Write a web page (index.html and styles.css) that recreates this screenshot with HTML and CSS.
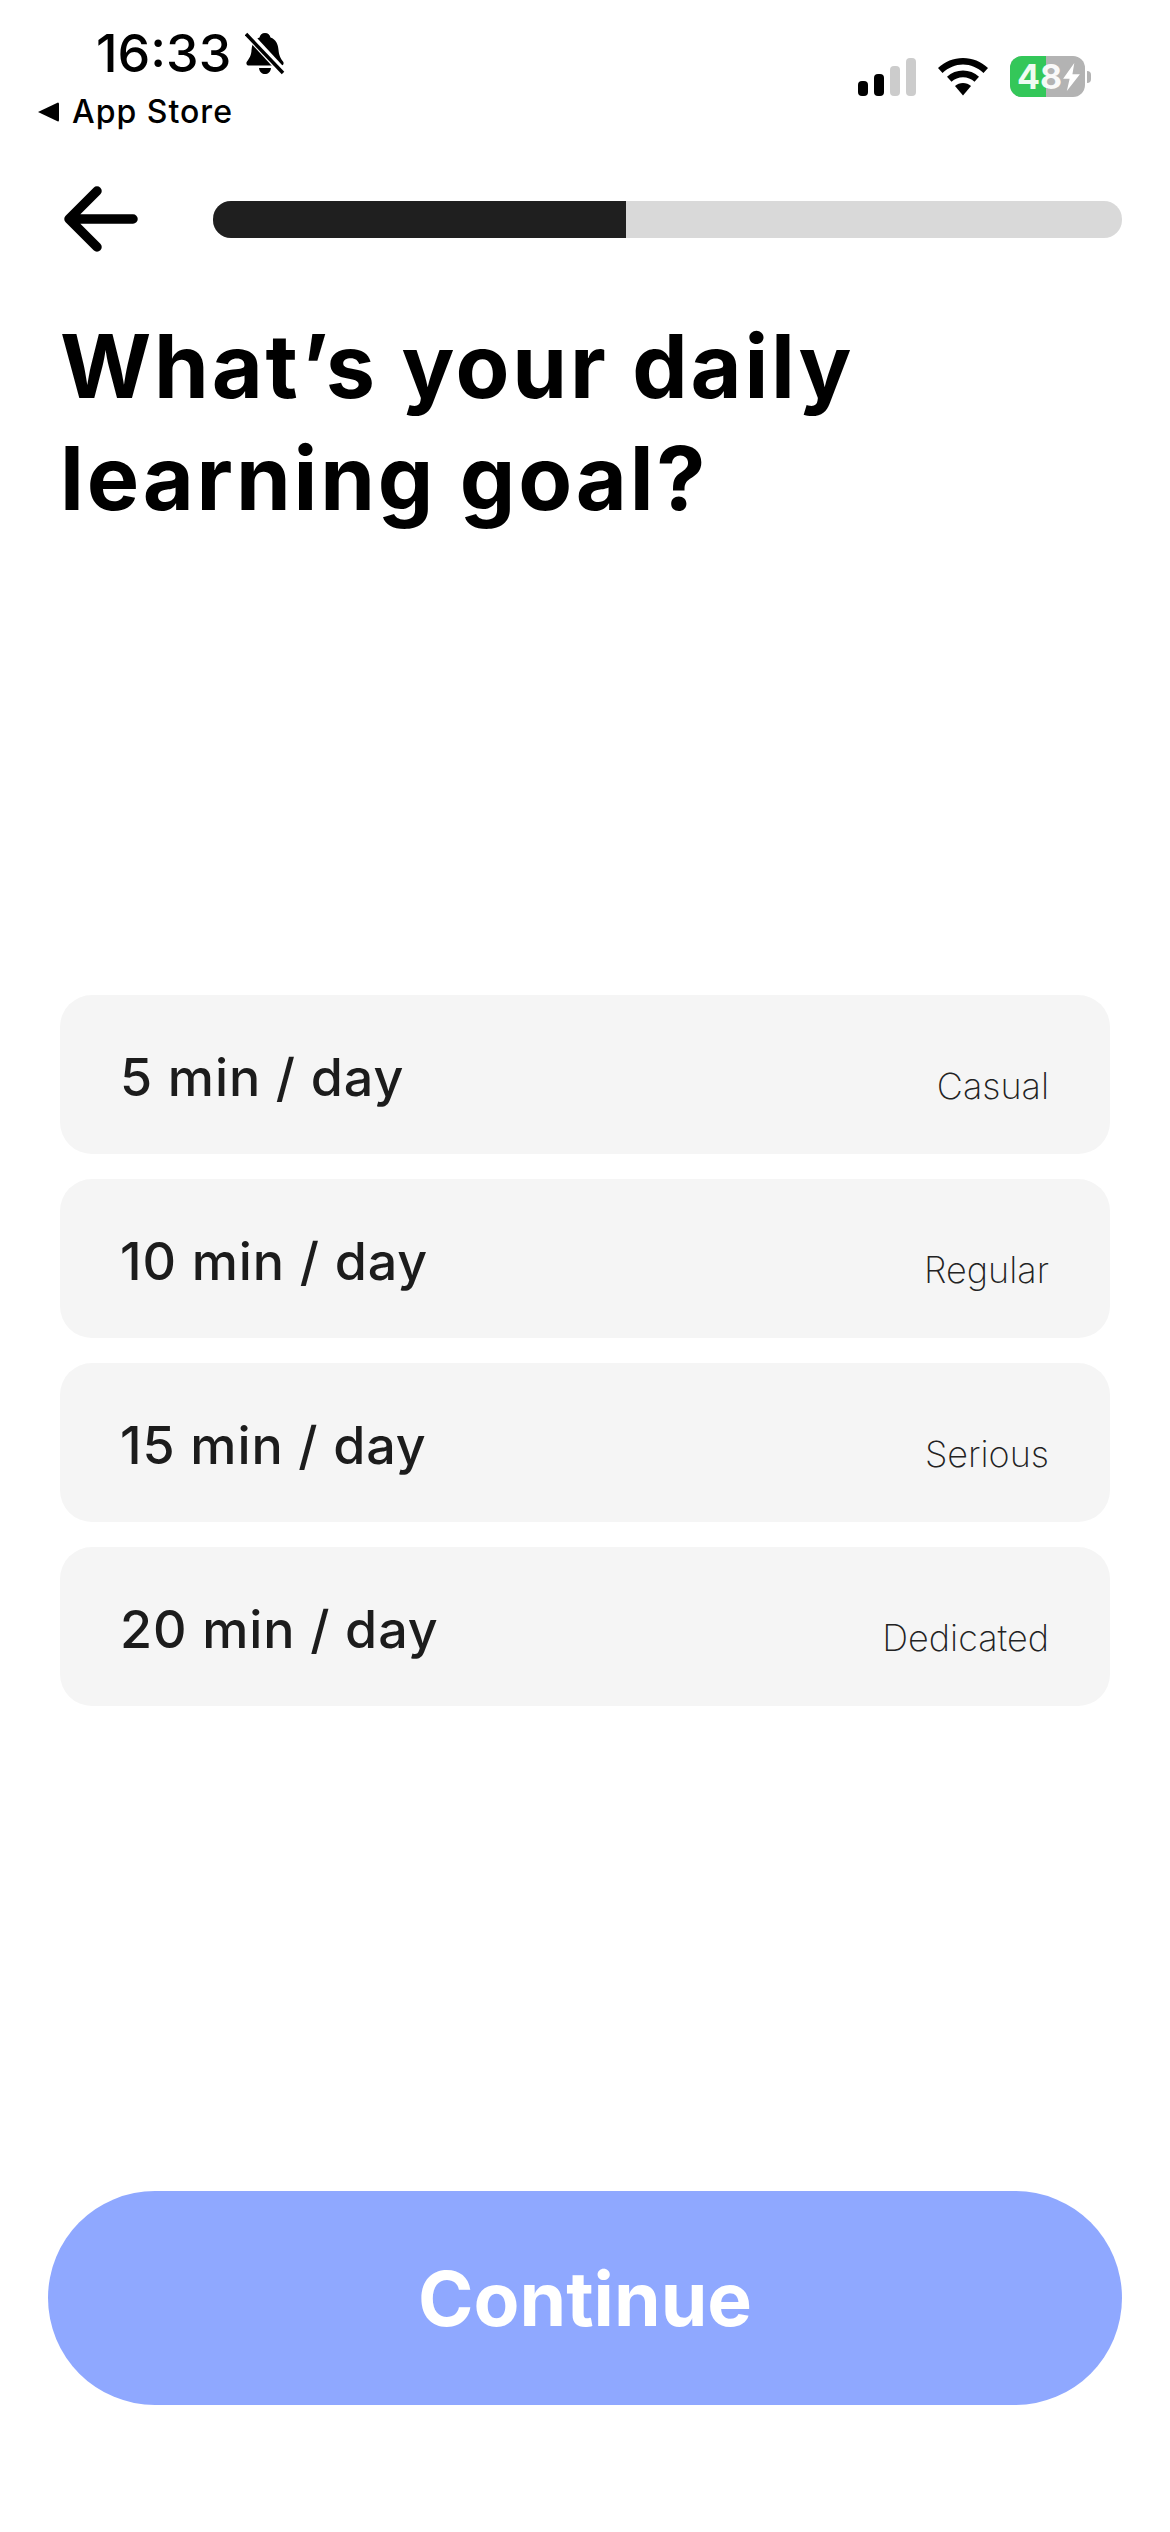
FILE: index.html
```html
<!DOCTYPE html>
<html lang="en">
<head>
<meta charset="utf-8">
<title>Daily goal</title>
<link rel="stylesheet" href="styles.css">
</head>
<body>
<main class="page">
  <header class="status">
    <div class="status-left">
      <div class="time-row">
        <span class="time">16:33</span>
        <svg class="bell" viewBox="0 0 40 44" width="40" height="44" aria-hidden="true">
          <path d="M20 1c3 0 5 2 5.500 4.500C31 7.500 33 12 33.500 18c.5 6 2.500 9 4.500 11.500 1.500 2-0 4-2 4H4c-2 0-3.500-2-2-4C4 27 6.500 23 6.500 18 7 12 9 7.500 14.500 5.500 15 3 17 1 20 1z" fill="#000"/>
          <path d="M14 36h12c-.5 4-3 6-6 6s-5.500-2-6-6z" fill="#000"/>
          <path d="M2 1l36 39" stroke="#fff" stroke-width="8" fill="none"/>
          <path d="M1 2l37 39" stroke="#000" stroke-width="3.500" fill="none"/>
        </svg>
      </div>
      <div class="back-app">
        <svg class="tri" viewBox="0 0 22 20" width="22" height="20" aria-hidden="true"><path d="M0 10L20 0.500Q21 0.500 21 2V18Q21 19.500 20 19.500z" fill="#000"/></svg>
        <span>App Store</span>
      </div>
    </div>
    <div class="status-right">
      <svg class="signal" viewBox="0 0 58 38" width="58" height="38" aria-hidden="true">
        <rect x="0" y="23" width="10" height="15" rx="4" fill="#000"/>
        <rect x="16" y="16" width="10" height="22" rx="4" fill="#000"/>
        <rect x="32" y="8" width="10" height="30" rx="4" fill="#ccc"/>
        <rect x="48" y="0" width="10" height="38" rx="4" fill="#ccc"/>
      </svg>
      <svg class="wifi" viewBox="0 0 50 38" width="50" height="38" aria-hidden="true">
        <path d="M25 0c9.500 0 18 3.500 25 10l-4.500 5C39.500 9.500 32.500 6.500 25 6.500S10.500 9.500 4.500 15L0 10C7 3.500 15.500 0 25 0z" fill="#000"/>
        <path d="M25 12.500c6 0 11.500 2.200 16 6.200l-4.500 5c-3.200-2.800-7.200-4.400-11.500-4.400s-8.300 1.600-11.500 4.400l-4.500-5c4.500-4 10-6.200 16-6.200z" fill="#000"/>
        <path d="M25 25c3 0 5.800 1 8 3L25 37.500 17 28c2.200-2 5-3 8-3z" fill="#000"/>
      </svg>
      <div class="battery">
        <div class="battery-body">
          <div class="battery-fill"></div>
          <span class="battery-num">48</span>
          <svg class="bolt" viewBox="0 0 18 30" width="17" height="28" aria-hidden="true"><path d="M12 0L0 17h7l-3 13L18 12h-8z" fill="#fff"/></svg>
        </div>
        <div class="battery-cap"></div>
      </div>
    </div>
  </header>

  <nav class="topbar">
    <svg class="back" viewBox="0 0 76 72" width="76" height="72" aria-hidden="true">
      <path d="M70 36H8M34 8L6 36l28 28" fill="none" stroke="#000" stroke-width="9.500" stroke-linecap="round" stroke-linejoin="round"/>
    </svg>
    <div class="progress"><div class="progress-fill"></div></div>
  </nav>

  <h1 class="title">What’s your daily<br>learning goal?</h1>

  <ul class="options">
    <li class="option"><span class="option-main">5 min / day</span><span class="option-tag">Casual</span></li>
    <li class="option"><span class="option-main">10 min / day</span><span class="option-tag">Regular</span></li>
    <li class="option"><span class="option-main">15 min / day</span><span class="option-tag">Serious</span></li>
    <li class="option"><span class="option-main">20 min / day</span><span class="option-tag">Dedicated</span></li>
  </ul>

  <button class="continue" type="button">Continue</button>
</main>
</body>
</html>
```

FILE: styles.css
```css
* { box-sizing: border-box; }
html, body { margin: 0; padding: 0; background: #fff; }
body { font-family: "Inter", "Liberation Sans", sans-serif; color: #000; }

.page {
  width: 1170px;
  height: 2532px;
  display: flex;
  flex-direction: column;
  overflow: hidden;
}

.status {
  height: 134px;
  padding: 25px 79px 0 38px;
  display: flex;
  justify-content: space-between;
}
.time-row {
  display: flex;
  align-items: center;
  gap: 14px;
  margin-left: 58px;
  height: 58px;
}
.time { font-size: 52px; font-weight: 500; line-height: 58px; }
.back-app {
  display: flex;
  align-items: center;
  gap: 12px;
  height: 40px;
  margin-top: 9px;
  font-size: 32px;
  font-weight: 500;
  line-height: 40px;
  letter-spacing: 1px;
}
.status-right {
  display: flex;
  align-items: flex-start;
  padding-top: 30px;
}
.signal { margin-right: 22px; margin-top: 3px; }
.wifi { margin-right: 22px; margin-top: 3px; }
.battery { display: flex; align-items: center; margin-top: 1px; }
.battery-body {
  position: relative;
  width: 75px;
  height: 41px;
  border-radius: 12px;
  background: #b3b3b3;
  overflow: hidden;
  display: flex;
  align-items: center;
  padding-left: 7px;
}
.battery-fill { position: absolute; left: 0; top: 0; bottom: 0; width: 36px; background: #34c759; }
.battery-num {
  position: relative;
  font-size: 34px;
  font-weight: 700;
  line-height: 41px;
  color: #fff;
  opacity: .92;
}
.bolt { position: relative; margin-left: 1px; }
.battery-cap { width: 4px; height: 12px; margin-left: 2px; border-radius: 0 4px 4px 0; background: #b3b3b3; }

.topbar {
  height: 72px;
  margin-top: 49px;
  padding: 0 48px 0 63px;
  display: flex;
  align-items: center;
  gap: 74px;
}
.back { flex: none; }
.progress {
  flex: 1;
  height: 37px;
  border-radius: 18px;
  background: #d9d9d9;
  overflow: hidden;
}
.progress-fill { width: 45.400%; height: 100%; background: #1f1f1f; }

.title {
  margin: 55px 0 0 60px;
  font-size: 88px;
  line-height: 112px;
  font-weight: 700;
  letter-spacing: 2.800px;
}

.options {
  list-style: none;
  margin: 461px 0 0;
  padding: 0 60px;
  display: flex;
  flex-direction: column;
  gap: 25px;
}
.option {
  height: 159px;
  border-radius: 32px;
  background: #f5f5f5;
  padding: 6px 61px 0 60px;
  display: flex;
  align-items: center;
  justify-content: space-between;
}
.option-main { font-size: 52px; font-weight: 450; letter-spacing: 0.9px; color: #1c1c1c; }
.option-tag { font-size: 36px; font-weight: 200; color: #222; margin-top: 16px; }

.continue {
  margin: auto 48px 127px;
  height: 214px;
  width: 1074px;
  border: 0;
  border-radius: 107px;
  background: #8fa8ff;
  color: #fff;
  font-family: inherit;
  font-size: 75px;
  font-weight: 700;
  padding: 0;
}
```
